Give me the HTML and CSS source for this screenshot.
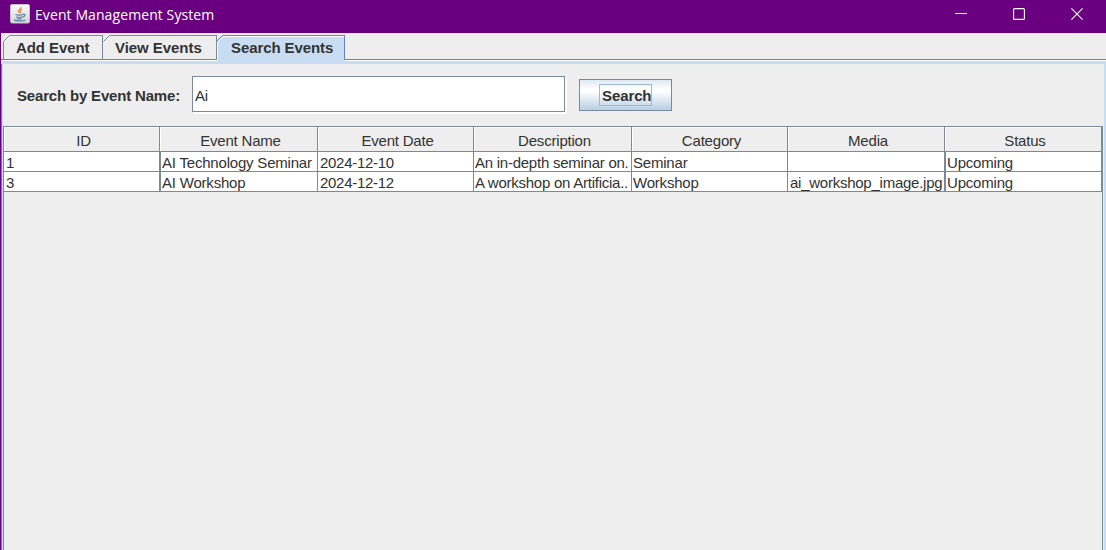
FILE: index.html
```html
<!DOCTYPE html>
<html lang="en">
<head>
<meta charset="utf-8">
<title>Event Management System</title>
<link rel="stylesheet" href="styles.css">
</head>
<body>
<div class="window">
  <header class="titlebar">
    <svg class="app-icon" width="20" height="20" viewBox="0 0 20 20">
      <defs><linearGradient id="tile" x1="0" y1="0" x2="0" y2="1"><stop offset="0" stop-color="#fafafa"/><stop offset="1" stop-color="#d3d6d9"/></linearGradient></defs>
      <rect x=".5" y=".5" width="19" height="18.5" rx="1.5" fill="url(#tile)" stroke="#c3bfc9"/>
      <path d="M10.800 3C12 4.800 7.600 5.800 8.400 7.500c.2.600.7 1 1 1.500M12 5.400c-2 .8-2.600 1.500-1.500 2.600.4.500.2.800-.2 1.200" fill="none" stroke="#e38b45" stroke-width="1.200"/>
      <path d="M5.500 10.500c2 .8 5.500.7 7.500 0M6.200 12.700c2 .7 4.600.6 6.300 0M7 14.600c1.500.5 3.400.5 4.800 0M13 10.200c2.800-.6 2.700 2-.2 2.900M4 15.800c2 1.500 9 1.500 11.500.2" fill="none" stroke="#557f9f" stroke-width="1.200"/>
    </svg>
    <span class="title">Event Management System</span>
    <div class="controls">
      <svg width="12" height="12" viewBox="0 0 12 12"><path d="M0 5.500h12"/></svg>
      <svg width="12" height="12" viewBox="0 0 12 12"><rect x=".6" y=".6" width="10.800" height="10.800" rx="1"/></svg>
      <svg width="12" height="12" viewBox="0 0 12 12"><path d="M.4.4l11.200 11.200M11.600.4L.4 11.600"/></svg>
    </div>
  </header>
  <nav class="tabs">
    <div class="tab add"><svg width="8" height="25" viewBox="0 0 8 25"><path class="edge" d="M.5 25V6.500L6.500.5H8"/></svg><span>Add Event</span></div>
    <div class="tab view"><svg width="8" height="25" viewBox="0 0 8 25"><path class="edge" d="M.5 6.500L6.500.5H8"/></svg><span>View Events</span></div>
    <div class="tab search active"><svg width="8" height="25" viewBox="0 0 8 25"><path class="corner" d="M0 0h6L0 6z"/><path class="shine" d="M.5 25V7.500L6.500 1.500H8"/><path class="edge" d="M0 6L5.500.5H8"/></svg><span>Search Events</span></div>
    <div class="baseline"></div>
  </nav>
  <main class="panel">
    <form class="search-row">
      <label for="name">Search by Event Name:</label>
      <input id="name" class="field" type="text" value="Ai">
      <button class="button" type="button"><span>Search</span></button>
    </form>
    <section class="scroll">
      <div class="row head"><div>ID</div><div>Event Name</div><div>Event Date</div><div>Description</div><div>Category</div><div>Media</div><div>Status</div></div>
      <div class="row"><div>1</div><div class="thick">AI Technology Seminar</div><div class="date">2024-12-10</div><div class="desc">An in-depth seminar on.</div><div class="cat">Seminar</div><div></div><div class="thick">Upcoming</div></div>
      <div class="row"><div>3</div><div class="thick">AI Workshop</div><div class="date">2024-12-12</div><div class="desc">A workshop on Artificia..</div><div class="cat">Workshop</div><div class="file">ai_workshop_image.jpg</div><div class="thick">Upcoming</div></div>
    </section>
  </main>
</div>
</body>
</html>
```
FILE: styles.css
```css
* { box-sizing: border-box; }
body { margin: 0; overflow: hidden; background: #eee; color: #333; font: 15px/18px "Liberation Sans", Arial, sans-serif; }
.window { width: 1106px; height: 550px; display: flex; flex-direction: column; border-left: 1px solid #6a007f; }
.titlebar { height: 33px; flex: none; margin-left: -1px; padding-left: 10px; display: flex; background: #6a007f; }
.app-icon { margin-top: 4px; }
.title { margin: 5px 0 0 5px; color: #fff; font: 14px/20px "Open Sans", "Noto Sans", sans-serif; letter-spacing: .09px; white-space: nowrap; }
.controls { margin: 8px 22px 0 auto; display: flex; gap: 46px; fill: none; stroke: #fff; stroke-width: 1.1; }
.controls svg { margin-left: -1px; margin-right: 1px; }
.controls svg:first-child { shape-rendering: crispEdges; }
.tabs { height: 31px; flex: none; padding: 2px 0 0 2px; position: relative; display: flex; font-weight: bold; letter-spacing: -.09px; }
.tab { height: 25px; display: flex; white-space: nowrap; border-right: 1px solid #7a8a99; }
.tab span { flex: 1; border-top: 1px solid #7a8a99; padding: 3px 0 0 5px; }
.tab svg { flex: none; }
.edge { fill: none; stroke: #7a8a99; }
.add { width: 100px; }
.view { width: 114px; }
.view span { padding-left: 4px; letter-spacing: -.05px; }
.active { width: 128px; height: 29px; position: relative; z-index: 1; border-right: 0; background: linear-gradient(#c8ddf2, #c8ddf2) 0 0 / 127px 29px no-repeat; }
.active span { height: 24px; background: #c8ddf2; border-top-color: #6382bf; border-right: 1px solid #6382bf; padding-left: 6px; box-shadow: inset 0 1px #fff; }
.active .edge { stroke: #6382bf; }
.corner { fill: #eee; }
.shine { fill: none; stroke: #fff; }
.baseline { position: absolute; left: 0; right: 0; top: 26px; height: 5px; border-top: 1px solid #6382bf; background: #c8ddf2; box-shadow: inset 0 1px #fff; }
.panel { flex: 1; display: flex; flex-direction: column; border-left: 1px solid #6382bf; border-right: 2px solid #c8ddf2; box-shadow: inset 1px 0 #c8ddf2; }
.search-row { height: 62px; margin: 0; padding: 12px 0 0 15px; display: flex; align-items: flex-start; }
.search-row label { width: 175px; padding-top: 11px; font-weight: bold; letter-spacing: -.18px; white-space: nowrap; }
.field { width: 373px; height: 36px; border: 1px solid #7a8a99; padding: 2px 2px 0; outline: 0; background: #fff; color: #333; font: inherit; letter-spacing: -.2px; box-shadow: 2px 2px #fff; }
.button { width: 93px; height: 32px; margin: 3px 0 0 14px; padding: 0; border: 1px solid #7a8a99; color: #333; font: bold 15px/18px "Liberation Sans", Arial, sans-serif; letter-spacing: -.1px; background: linear-gradient(#dde8f3 0, #fff 30%, #fff 38%, #b8cfe5 100%); }
.button span { display: block; width: 53px; height: 22px; margin: 0 0 0 19px; padding: 2px 0 0 2px; border: 1px solid #a3b8cc; text-align: left; }
.scroll { flex: 1; margin-left: 1px; margin-right: 1px; border: solid #7a8a99; border-width: 1px 1px 0; letter-spacing: -.2px; }
.row { display: grid; grid-template-columns: 156px 158px 156px 158px 156px 157px 157px; height: 20px; }
.row div { border-right: 1px solid #7a8a99; border-bottom: 1px solid #7a8a99; background: #fff; padding: 2px 0 0 2px; line-height: 17px; white-space: nowrap; overflow: hidden; }
.row .thick { border-left: 1px solid #7a8a99; padding-left: 1px; }
.row .date { letter-spacing: -.28px; }
.row .desc { letter-spacing: -.25px; padding-left: 1px; }
.row .cat { padding-left: 1px; }
.row .file { letter-spacing: -.25px; }
.head.row { height: 25px; }
.head.row div { background: #eee; padding: 5px 0 0 4px; line-height: 18px; text-align: center; box-shadow: inset 1px 1px #fff; }
```
